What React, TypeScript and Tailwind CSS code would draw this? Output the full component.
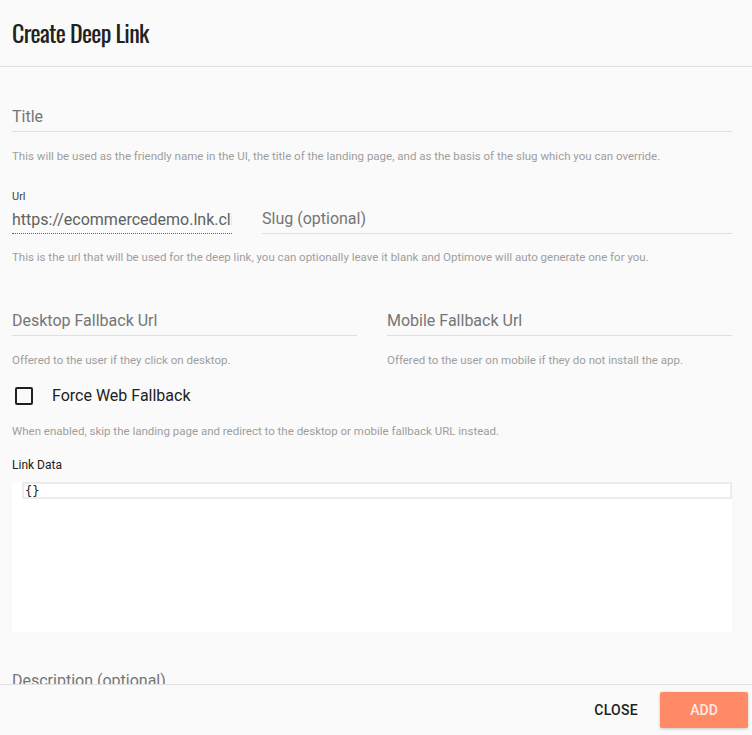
import React from "react";

function Helper({ children, className = "" }: { children: React.ReactNode; className?: string }) {
    return <p className={`text-[11.5px] leading-4 text-[#9e9e9e] ${className}`}>{children}</p>;
}

function Field({ placeholder, className = "" }: { placeholder: string; className?: string }) {
    return (
        <div className={`h-8 border-b border-[#e0e0e0] flex items-end pb-[4px] ${className}`}>
            <span className="text-[16px] leading-5 text-[#757575]">{placeholder}</span>
        </div>
    );
}

export default function App() {
    return (
        <div
            className="h-[735px] w-[752px] bg-[#fafafa] flex flex-col overflow-hidden"
            style={{ fontFamily: "Roboto, 'Liberation Sans', sans-serif" }}
        >
            {/* Encabezado */}
            <div className="h-[67px] shrink-0 border-b border-[#e0e0e0] flex items-center px-3">
                <h1
                    className="text-[24px] leading-none text-[#212121] pb-[2px] tracking-[-0.7px]"
                    style={{ fontFamily: "'Oswald', 'Liberation Sans Narrow', 'DejaVu Sans Condensed', sans-serif" }}
                >
                    Create Deep Link
                </h1>
            </div>

            {/* Contenido */}
            <div className="flex-1 overflow-hidden px-3 pr-5">
                <Field placeholder="Title" className="mt-[33px]" />
                <Helper className="mt-[16px]">
                    This will be used as the friendly name in the UI, the title of the landing page, and as the basis of the slug which you can override.
                </Helper>

                <p className="mt-[26px] text-[11px] leading-[14px] text-[#424242]">Url</p>
                <div className="flex gap-[30px]">
                    <div className="w-[220px] h-[30px] border-b border-dotted border-[#616161] flex items-end pb-[3px] overflow-hidden">
                        <span className="text-[16px] leading-5 text-[#616161] whitespace-nowrap">https://ecommercedemo.lnk.click</span>
                    </div>
                    <div className="flex-1 h-[30px] border-b border-[#e0e0e0] flex items-end pb-[4px]">
                        <span className="text-[16px] leading-5 text-[#757575]">Slug (optional)</span>
                    </div>
                </div>
                <Helper className="mt-[15px]">
                    This is the url that will be used for the deep link, you can optionally leave it blank and Optimove will auto generate one for you.
                </Helper>

                <div className="grid grid-cols-2 gap-[30px] mt-[39px]">
                    <div>
                        <Field placeholder="Desktop Fallback Url" />
                        <Helper className="mt-[16px]">Offered to the user if they click on desktop.</Helper>
                    </div>
                    <div>
                        <Field placeholder="Mobile Fallback Url" />
                        <Helper className="mt-[16px]">Offered to the user on mobile if they do not install the app.</Helper>
                    </div>
                </div>

                <label className="flex items-center mt-[16px] h-[24px]">
                    <span className="ml-[3px] w-[18px] h-[18px] border-2 border-[#212121] rounded-[2px]" />
                    <span className="ml-[19px] text-[16px] text-[#212121]">Force Web Fallback</span>
                </label>
                <Helper className="mt-[15px]">
                    When enabled, skip the landing page and redirect to the desktop or mobile fallback URL instead.
                </Helper>

                <p className="mt-[18px] text-[12px] leading-4 text-[#212121]">Link Data</p>
                <div className="mt-[9px] h-[150px] bg-white">
                    <div className="ml-[10px] h-[17px] border-2 border-[#ececec] flex items-center px-[1px]">
                        <span
                            className="text-[12px] leading-none text-[#212121]"
                            style={{ fontFamily: "'DejaVu Sans Mono', monospace" }}
                        >
                            {"{}"}
                        </span>
                    </div>
                </div>

                <p className="mt-[39px] text-[16px] leading-5 text-[#757575]">Description (optional)</p>
            </div>

            {/* Pie */}
            <div className="h-[51px] shrink-0 border-t border-[#e0e0e0] flex items-center justify-end pr-1 gap-[10px]">
                <button className="h-9 px-3 text-[14px] font-medium text-[#212121] tracking-[0.3px]">CLOSE</button>
                <button className="h-9 w-[88px] rounded-[2px] bg-[#ff8a65] text-[14px] font-medium text-[#fbe9e7] shadow-[0_1px_3px_rgba(0,0,0,0.2)]">
                    ADD
                </button>
            </div>
        </div>
    );
}
